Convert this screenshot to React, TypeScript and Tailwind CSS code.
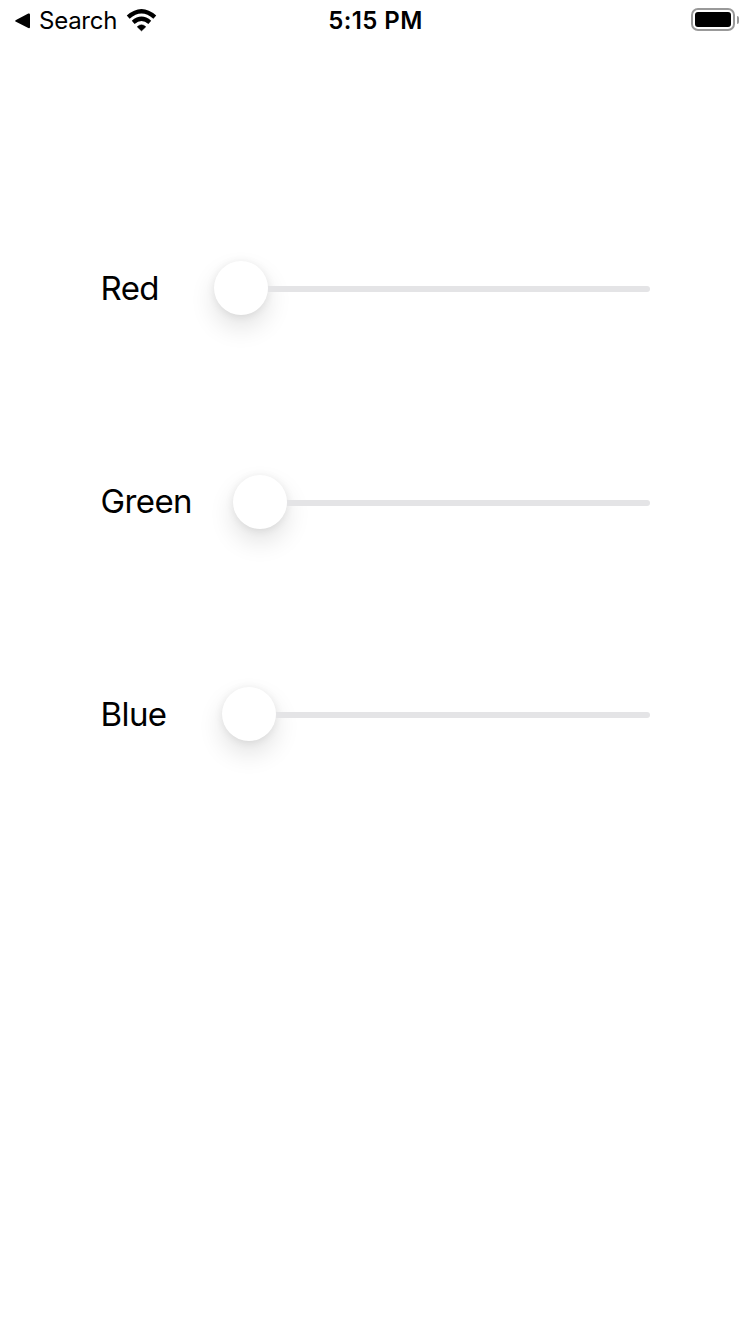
type ChannelProps = { label: string; labelClass: string; rowClass: string };

function StatusBar() {
  return (
    <header className="grid h-[42px] grid-cols-3 items-center">
      <div className="flex items-center pl-[15px]">
        <svg width="15" height="16" viewBox="0 0 15 16" className="shrink-0">
          <path d="M1 7.1 13.3.6Q15 0 15 1.8V13.9Q15 15.6 13.3 15L1 8.7Q-.6 7.9 1 7.1Z" />
        </svg>
        <span className="ml-[9px] w-[78px] text-[24px] leading-[42px] tracking-[-0.25px] whitespace-nowrap">Search</span>
        <svg width="31" height="24" viewBox="0 0 31 24" className="mb-[2px] ml-[9px] shrink-0">
          <path d="M15.5 23 11.1 18.8Q15.5 14.6 19.9 18.8Z" stroke="black" strokeWidth="0.4" strokeLinejoin="round" />
          <path d="M7.2 14.4Q15.5 7.2 23.8 14.4" fill="none" stroke="black" strokeWidth="4.3" />
          <path d="M2.2 9.2Q15.5 -2.6 28.8 9.2" fill="none" stroke="black" strokeWidth="4.3" />
        </svg>
      </div>
      <time className="pl-[1px] text-center text-[24px] leading-[42px] font-[560] tracking-[0.4px] whitespace-nowrap">5:15 PM</time>
      <div className="flex items-center justify-end pr-[11px] pb-[3px]">
        <div className="h-[23px] w-[44px] rounded-[7px] border-2 border-[#999999] p-[2px]">
          <div className="h-full w-full rounded-[3px] bg-black" />
        </div>
        <div className="ml-[2px] h-[8px] w-[2px] rounded-r-full bg-[#999999]" />
      </div>
    </header>
  );
}

function Channel({ label, labelClass, rowClass }: ChannelProps) {
  return (
    <div className={`flex h-[54px] items-center ${rowClass}`}>
      <span className={`shrink-0 pl-[0.5px] text-[33px] leading-[54px] tracking-[-0.6px] whitespace-nowrap ${labelClass}`}>{label}</span>
      <div className="size-[54px] shrink-0 rounded-full bg-white shadow-[0_12px_26px_rgba(0,0,0,0.12),0_1px_8px_rgba(0,0,0,0.08)]" />
      <div className="mt-[2px] h-[6px] flex-1 rounded-r-full bg-[#e4e4e6]" />
    </div>
  );
}

export default function App() {
  return (
    <div className="h-[1334px] w-[750px] overflow-hidden bg-white font-['Inter',sans-serif] text-black">
      <StatusBar />
      <main className="pt-[219px] pr-[100px] pl-[100px]">
        <Channel label="Red" labelClass="w-[114px]" rowClass="" />
        <Channel label="Green" labelClass="w-[133px] pb-[2px]" rowClass="mt-[160px]" />
        <Channel label="Blue" labelClass="w-[122px]" rowClass="mt-[158px]" />
      </main>
    </div>
  );
}
